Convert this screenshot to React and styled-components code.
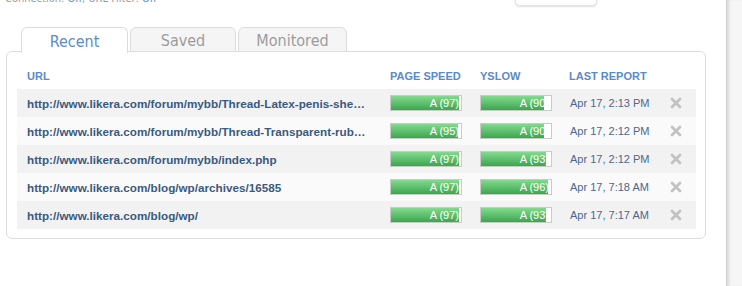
import styled, { createGlobalStyle } from 'styled-components';

const GlobalStyle = createGlobalStyle`
  html, body {
    margin: 0;
    padding: 0;
    background: #ffffff;
    overflow: hidden;
  }
`;

const Page = styled.div`
  display: flex;
  width: 742px;
  height: 286px;
  overflow: hidden;
`;

const Main = styled.main`
  width: 726px;
  flex: none;
`;

const Sidebar = styled.aside`
  flex: 1;
  background: #f6f6f6;
  border-left: 1px solid #d4d4d4;
  box-shadow: inset 3px 0 3px -1px rgba(0, 0, 0, 0.12);
`;

const StatusBar = styled.div`
  display: flex;
  align-items: flex-end;
  height: 14px;
  margin-top: -8px;
  padding-left: 5px;
`;

const StatusText = styled.span`
  font-family: 'DejaVu Sans Condensed', 'DejaVu Sans', sans-serif;
  font-size: 11px;
  line-height: 14px;
  color: #9a9a9a;
  width: 510px;
`;

const Off = styled.span`
  color: #5b8cc8;
`;

const TopButton = styled.div`
  width: 80px;
  height: 14px;
  border: 1px solid #e4e4e4;
  border-radius: 0 0 4px 4px;
  box-shadow: 0 1px 2px rgba(0, 0, 0, 0.12);
  background: #fff;
`;

const Tabs = styled.nav`
  display: flex;
  gap: 2px;
  margin: 21px 0 0 21px;
  position: relative;
  z-index: 1;
`;

const Tab = styled.div`
  box-sizing: border-box;
  width: ${(p) => p.$w}px;
  height: ${(p) => (p.$active ? 26 : 25)}px;
  margin-bottom: ${(p) => (p.$active ? -1 : 0)}px;
  display: flex;
  align-items: center;
  justify-content: center;
  border: 1px solid #dcdcdc;
  border-bottom: ${(p) => (p.$active ? 'none' : '1px solid #dcdcdc')};
  border-radius: 6px 6px 0 0;
  background: ${(p) => (p.$active ? '#ffffff' : '#f5f5f5')};
  color: ${(p) => (p.$active ? '#5b8cc8' : '#9c9c9c')};
  font-family: 'DejaVu Sans Condensed', 'DejaVu Sans', sans-serif;
  font-size: 16px;
  padding-top: 1px;
`;

const Panel = styled.section`
  box-sizing: border-box;
  margin-left: 6px;
  margin-top: -1px;
  width: 700px;
  border: 1px solid #dcdcdc;
  border-radius: 6px;
  padding: 11px 9px 9px 10px;
  background: #fff;
`;

const Row = styled.div`
  display: grid;
  grid-template-columns: 363px 90px 89px 101px 1fr;
  align-items: center;
  height: 28px;
  padding-left: 10px;
  background: ${(p) => (p.$head ? 'transparent' : p.$odd ? '#f2f2f2' : '#fafafa')};
  ${(p) => p.$head && 'height: 25px; margin-bottom: 1px;'}
`;

const HeadCell = styled.div`
  font-family: 'Liberation Sans', Arial, sans-serif;
  font-size: 11px;
  font-weight: bold;
  color: #5b8ac6;
`;

const UrlCell = styled.div`
  font-family: 'Liberation Sans', Arial, sans-serif;
  font-size: 11.7px;
  font-weight: bold;
  color: #3a5a80;
  white-space: nowrap;
  overflow: hidden;
  text-overflow: ellipsis;
  padding-right: 22px;
`;

const Bar = styled.div`
  box-sizing: border-box;
  width: 72px;
  height: 16px;
  border: 1px solid #cacaca;
  background: #fff;
  display: flex;
`;

const Fill = styled.div`
  height: 100%;
  background: linear-gradient(#82da8e, #3ea54e);
  overflow: hidden;
`;

const FillLabel = styled.div`
  width: 68px;
  color: #fff;
  font-family: 'Liberation Sans', Arial, sans-serif;
  font-size: 11px;
  line-height: 14px;
  text-align: right;
  white-space: nowrap;
`;

const DateCell = styled.div`
  font-family: 'Liberation Sans', Arial, sans-serif;
  font-size: 11px;
  color: #4a6890;
  padding-left: 1px;
`;

const Remove = styled.div`
  display: flex;
  align-items: center;
`;

const rows = [
  { url: 'http://www.likera.com/forum/mybb/Thread-Latex-penis-sheath-with-balls', ps: 97, ys: 90, date: 'Apr 17, 2:13 PM' },
  { url: 'http://www.likera.com/forum/mybb/Thread-Transparent-rubber-suit', ps: 95, ys: 90, date: 'Apr 17, 2:12 PM' },
  { url: 'http://www.likera.com/forum/mybb/index.php', ps: 97, ys: 93, date: 'Apr 17, 2:12 PM' },
  { url: 'http://www.likera.com/blog/wp/archives/16585', ps: 97, ys: 96, date: 'Apr 17, 7:18 AM' },
  { url: 'http://www.likera.com/blog/wp/', ps: 97, ys: 93, date: 'Apr 17, 7:17 AM' },
];

function Score({ value }) {
  return (
    <Bar>
      <Fill style={{ width: `${value}%` }}>
        <FillLabel>A ({value})</FillLabel>
      </Fill>
    </Bar>
  );
}

function CrossIcon() {
  return (
    <svg width="12" height="12" viewBox="0 0 12 12">
      <path d="M2 2 L10 10 M10 2 L2 10" stroke="#c2c2c2" strokeWidth="2.8" strokeLinecap="round" />
    </svg>
  );
}

export default function App() {
  return (
    <Page>
      <GlobalStyle />
      <Main>
        <StatusBar>
          <StatusText>
            Connection: <Off>Off</Off>, URL Filter: <Off>Off</Off>
          </StatusText>
          <TopButton />
        </StatusBar>
        <Tabs>
          <Tab $active $w={107}>Recent</Tab>
          <Tab $w={106}>Saved</Tab>
          <Tab $w={109}>Monitored</Tab>
        </Tabs>
        <Panel>
          <Row $head>
            <HeadCell>URL</HeadCell>
            <HeadCell>PAGE SPEED</HeadCell>
            <HeadCell>YSLOW</HeadCell>
            <HeadCell>LAST REPORT</HeadCell>
            <span />
          </Row>
          {rows.map((r, i) => (
            <Row key={r.url} $odd={i % 2 === 0}>
              <UrlCell>{r.url}</UrlCell>
              <Score value={r.ps} />
              <Score value={r.ys} />
              <DateCell>{r.date}</DateCell>
              <Remove>
                <CrossIcon />
              </Remove>
            </Row>
          ))}
        </Panel>
      </Main>
      <Sidebar />
    </Page>
  );
}
